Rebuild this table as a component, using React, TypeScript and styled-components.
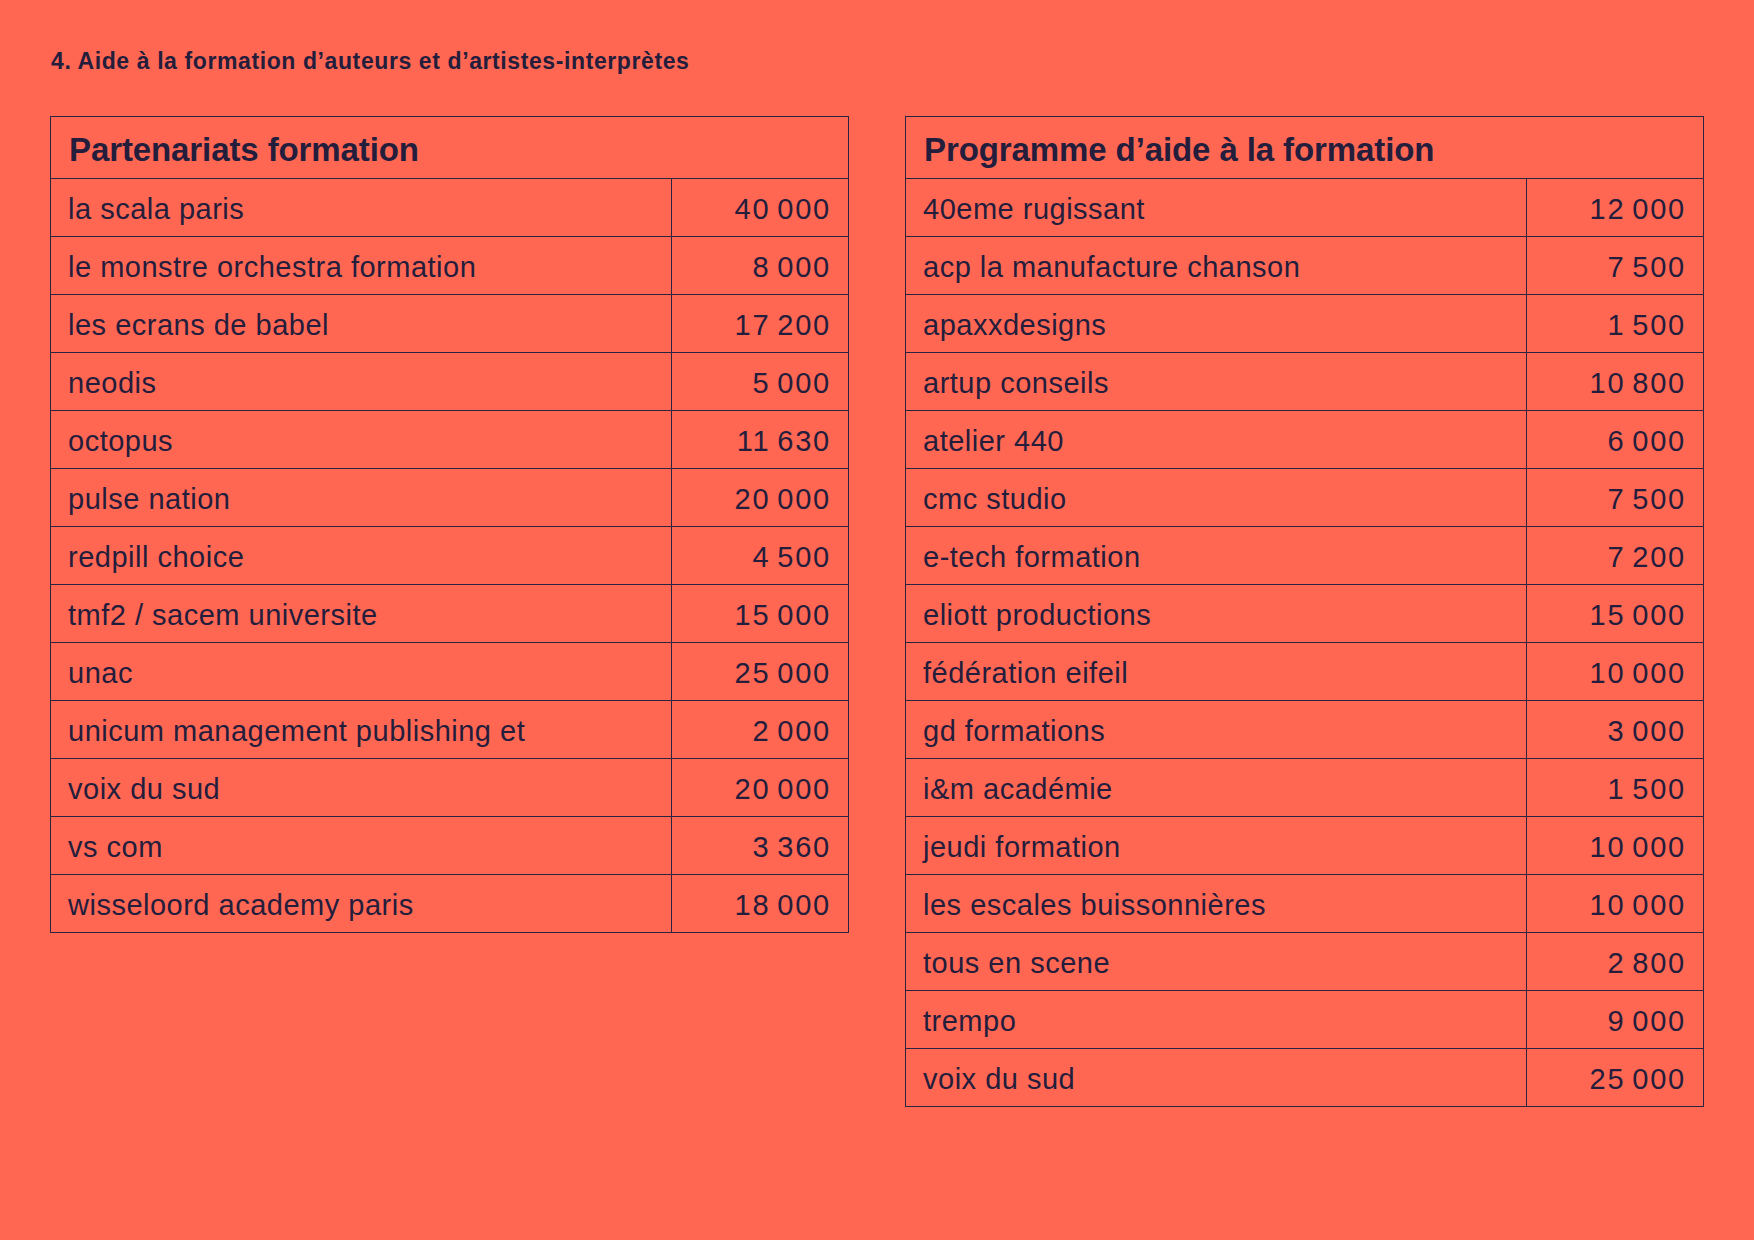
import React from "react";
import styled, { createGlobalStyle } from "styled-components";

const GlobalStyle = createGlobalStyle`
  html, body {
    margin: 0;
    padding: 0;
    background: #ff6753;
  }
  body {
    font-family: "Liberation Sans", Arial, sans-serif;
    color: #241d3c;
  }
`;

const Page = styled.div`
  width: 1754px;
  min-height: 1240px;
  box-sizing: border-box;
  padding: 47px 0 0 51px;
  background: #ff6753;
`;

const Title = styled.h1`
  margin: 0;
  font-size: 23px;
  line-height: 28px;
  font-weight: 700;
  letter-spacing: 0.6px;
  color: #241d3c;
`;

const Tables = styled.div`
  display: flex;
  align-items: flex-start;
  gap: 56px;
  margin-top: 41px;
  margin-left: -1px;
`;

const Card = styled.div`
  width: 799px;
  box-sizing: border-box;
  border: 1px solid #2a2442;
`;

const Header = styled.div`
  height: 61px;
  box-sizing: border-box;
  display: flex;
  align-items: center;
  padding: 5px 18px 0;
  font-size: 33px;
  font-weight: 700;
  letter-spacing: -0.1px;
  color: #241d3c;
  white-space: nowrap;
`;

const Row = styled.div`
  display: grid;
  grid-template-columns: 1fr 177px;
  height: 58px;
  box-sizing: border-box;
  border-top: 1px solid #2a2442;
`;

const Cell = styled.div<{ $num?: boolean }>`
  display: flex;
  align-items: center;
  justify-content: ${(p) => (p.$num ? "flex-end" : "flex-start")};
  box-sizing: border-box;
  padding: 4px ${(p) => (p.$num ? "17px" : "0")} 0 ${(p) => (p.$num ? "0" : "17px")};
  border-left: ${(p) => (p.$num ? "1px solid #2a2442" : "none")};
  font-size: 29px;
  letter-spacing: ${(p) => (p.$num ? "1.8px" : "0.5px")};
  word-spacing: ${(p) => (p.$num ? "-3px" : "0")};
  color: #241d3c;
  white-space: nowrap;
`;

type Entry = [string, string];

const left: Entry[] = [
  ["la scala paris", "40 000"],
  ["le monstre orchestra formation", "8 000"],
  ["les ecrans de babel", "17 200"],
  ["neodis", "5 000"],
  ["octopus", "11 630"],
  ["pulse nation", "20 000"],
  ["redpill choice", "4 500"],
  ["tmf2 / sacem universite", "15 000"],
  ["unac", "25 000"],
  ["unicum management publishing et", "2 000"],
  ["voix du sud", "20 000"],
  ["vs com", "3 360"],
  ["wisseloord academy paris", "18 000"],
];

const right: Entry[] = [
  ["40eme rugissant", "12 000"],
  ["acp la manufacture chanson", "7 500"],
  ["apaxxdesigns", "1 500"],
  ["artup conseils", "10 800"],
  ["atelier 440", "6 000"],
  ["cmc studio", "7 500"],
  ["e-tech formation", "7 200"],
  ["eliott productions", "15 000"],
  ["fédération eifeil", "10 000"],
  ["gd formations", "3 000"],
  ["i&m académie", "1 500"],
  ["jeudi formation", "10 000"],
  ["les escales buissonnières", "10 000"],
  ["tous en scene", "2 800"],
  ["trempo", "9 000"],
  ["voix du sud", "25 000"],
];

const FundTable = ({ title, rows }: { title: string; rows: Entry[] }) => (
  <Card>
    <Header>{title}</Header>
    {rows.map(([name, amount], i) => (
      <Row key={i}>
        <Cell>{name}</Cell>
        <Cell $num>{amount.replace(" ", "\u00a0")}</Cell>
      </Row>
    ))}
  </Card>
);

export default function App() {
  return (
    <>
      <GlobalStyle />
      <Page>
        <Title>4. Aide à la formation d’auteurs et d’artistes-interprètes</Title>
        <Tables>
          <FundTable title="Partenariats formation" rows={left} />
          <FundTable title="Programme d’aide à la formation" rows={right} />
        </Tables>
      </Page>
    </>
  );
}
